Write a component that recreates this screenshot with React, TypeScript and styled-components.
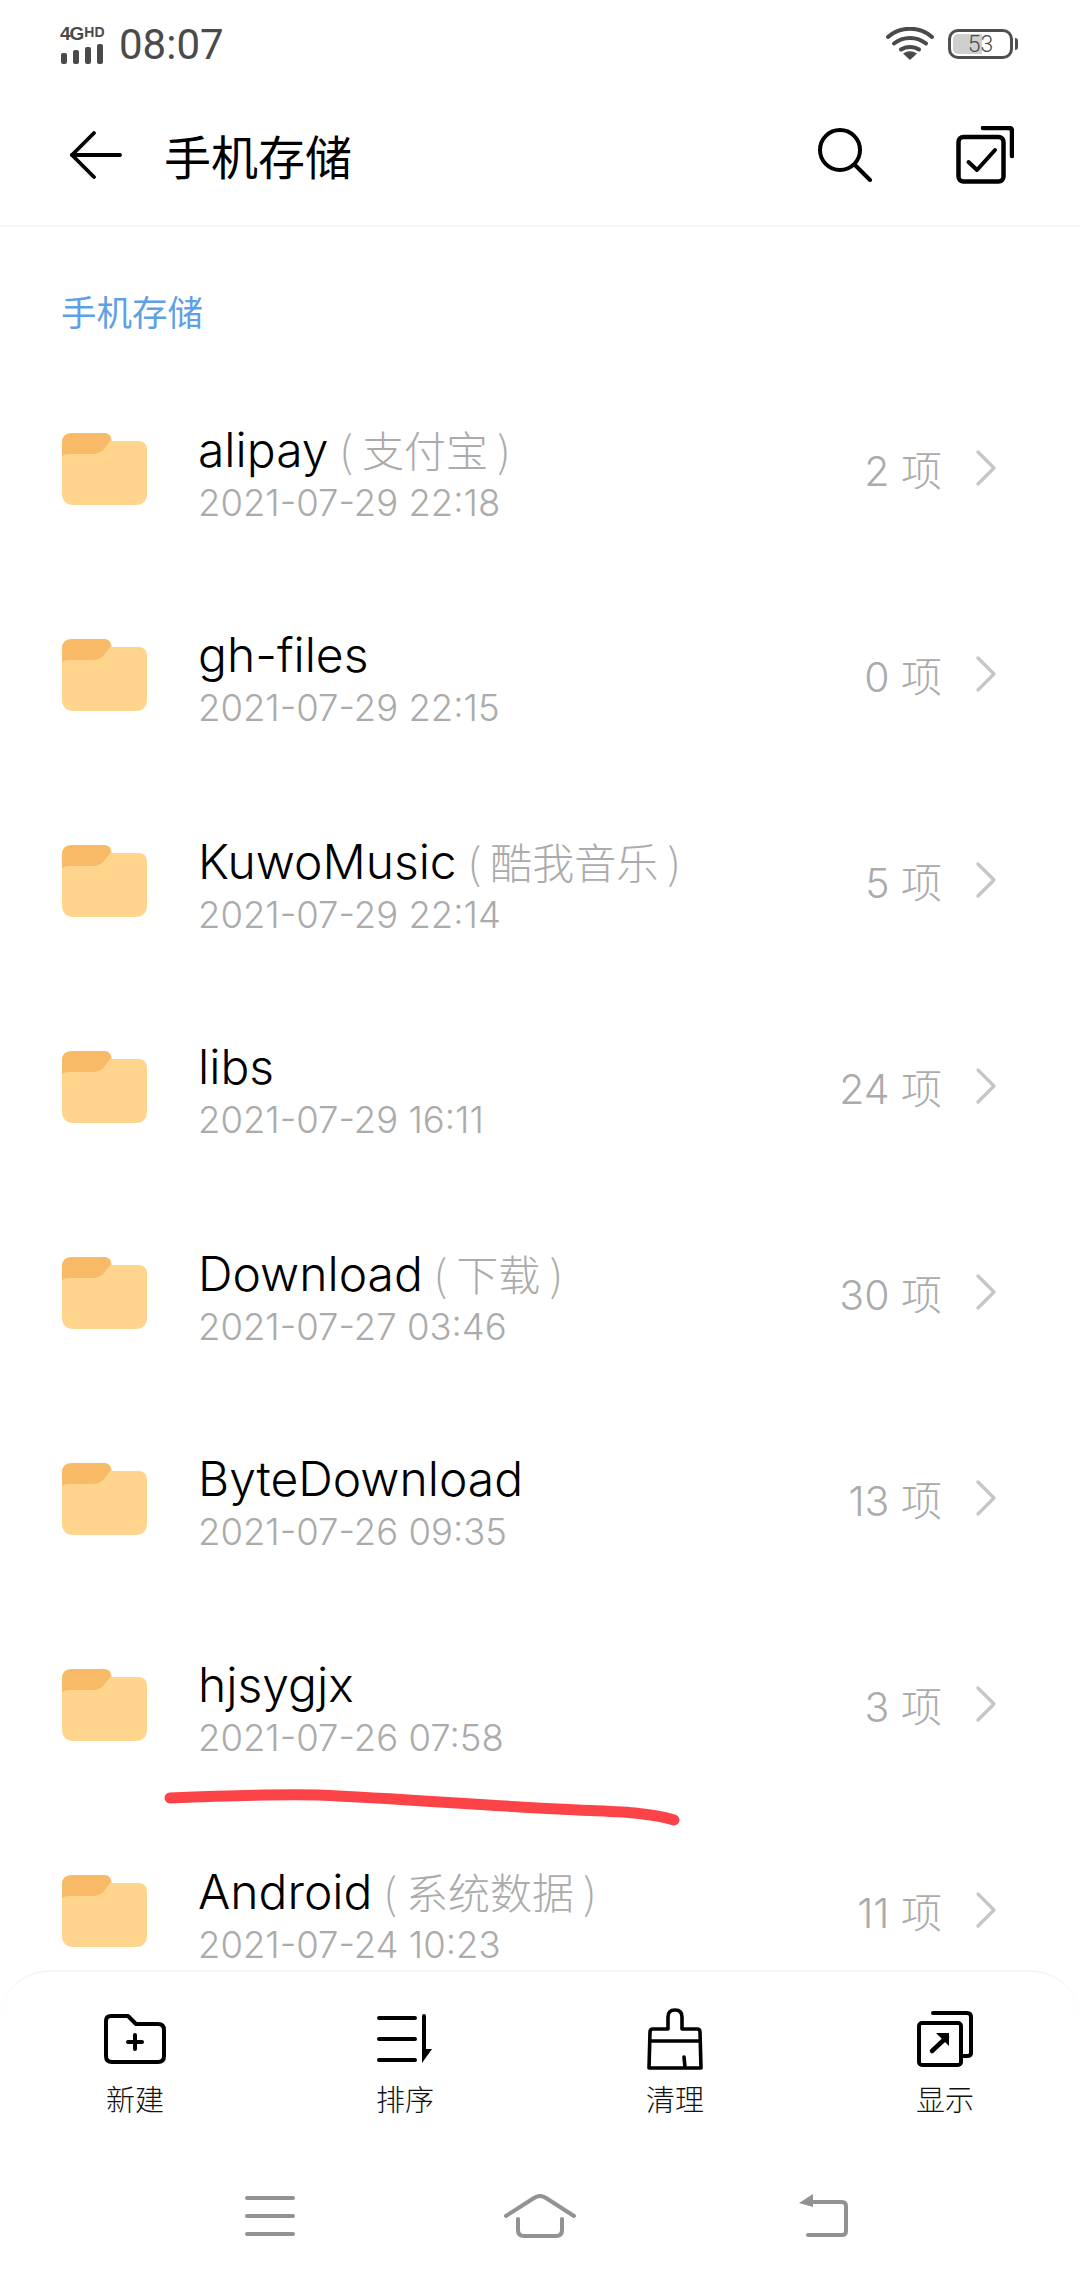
import React from 'react';
import styled, { createGlobalStyle } from 'styled-components';

const Global = createGlobalStyle`
    html, body {
        margin: 0;
        padding: 0;
        background: #fff;
    }
    body {
        font-family: Inter, "Noto Sans CJK SC", sans-serif;
    }
`;

const Page = styled.div`
    width: 1080px;
    height: 2280px;
    display: flex;
    flex-direction: column;
    background: #fff;
    overflow: hidden;
`;

const StatusBar = styled.div`
    height: 78px;
    flex: none;
    display: flex;
    align-items: center;
    justify-content: space-between;
    padding: 10px 60px 0 60px;
    box-sizing: border-box;
    color: #4a4a4a;
`;

const StatusLeft = styled.div`
    display: flex;
    align-items: center;
    gap: 13px;
`;

const StatusRight = styled.div`
    display: flex;
    align-items: center;
    gap: 14px;
`;

const Signal = styled.div`
    width: 46px;
    display: flex;
    flex-direction: column;
    gap: 1px;
`;

const SignalText = styled.div`
    display: flex;
    align-items: flex-start;
    gap: 1px;
    height: 18px;
    font-family: "Liberation Sans", sans-serif;
    font-weight: 700;
    font-size: 19px;
    line-height: 18px;
    letter-spacing: -1px;
    white-space: nowrap;
`;

const SignalHd = styled.span`
    font-size: 14px;
    line-height: 14px;
    letter-spacing: 0;
`;

const Clock = styled.div`
    font-family: Roboto, sans-serif;
    font-weight: 400;
    font-size: 42px;
    line-height: 46px;
    padding-top: 2px;
`;

const Battery = styled.div`
    position: relative;
    width: 65px;
    height: 30px;
    box-sizing: border-box;
    border: 3px solid #4f4f4f;
    border-radius: 10px;
    margin-right: 7px;
    display: flex;
    align-items: center;
    justify-content: center;
    font-family: Roboto, sans-serif;
    font-size: 23px;
    font-weight: 300;
    color: #4a4a4a;
    &::after {
        content: "";
        position: absolute;
        right: -8px;
        top: 6px;
        width: 3px;
        height: 12px;
        background: #4f4f4f;
        border-radius: 0 3px 3px 0;
    }
`;

const BatteryFill = styled.div`
    position: absolute;
    left: 2px;
    top: 2px;
    bottom: 2px;
    width: 29px;
    background: #cfcfcf;
    border-radius: 5px 0 0 5px;
`;

const BatteryText = styled.span`
    position: relative;
`;

const Header = styled.div`
    height: 149px;
    flex: none;
    box-sizing: border-box;
    border-bottom: 2px solid #f6f6f6;
    display: flex;
    align-items: center;
    padding: 6px 66px 0 70px;
`;

const Title = styled.div`
    margin-left: 42px;
    font-family: "Noto Sans CJK SC", sans-serif;
    font-size: 47px;
    color: #000;
    flex: 1;
`;

const HeaderActions = styled.div`
    display: flex;
    align-items: center;
    gap: 84px;
`;

const Section = styled.div`
    flex: none;
    height: 138px;
    box-sizing: border-box;
    padding: 61px 0 0 61px;
    font-family: "Noto Sans CJK SC", sans-serif;
    font-size: 35.500px;
    line-height: 46px;
    color: #5f9fe6;
`;

const List = styled.div`
    flex: 1;
    position: relative;
    overflow: hidden;
    min-height: 0;
`;

const Row = styled.div`
    height: 206px;
    flex: none;
    display: flex;
    align-items: center;
    padding: 0 83px 0 62px;
`;

const FolderSvg = styled.svg`
    margin-top: 2px;
    flex: none;
`;

const Info = styled.div`
    flex: 1;
    margin-left: 51px;
    display: flex;
    flex-direction: column;
    gap: 4px;
    position: relative;
    top: 5px;
`;

const NameLine = styled.div`
    font-size: 48px;
    line-height: 54px;
    font-weight: 300;
    color: #000;
    white-space: nowrap;
`;

const Alias = styled.span`
    font-family: "Noto Sans CJK SC", sans-serif;
    font-size: 42px;
    font-weight: 300;
    color: #ababab;
    margin-left: 11px;
`;

const DateLine = styled.div`
    font-size: 36.500px;
    line-height: 44px;
    font-weight: 300;
    color: #ababab;
`;

const Count = styled.div`
    font-size: 41px;
    font-weight: 300;
    color: #ababab;
    margin-right: 33px;
    white-space: nowrap;
    font-family: Inter, "Noto Sans CJK SC", sans-serif;
`;

const Stroke = styled.svg`
    position: absolute;
    left: 158px;
    top: 1417px;
    pointer-events: none;
`;

const BottomPanel = styled.div`
    height: 188px;
    flex: none;
    box-sizing: border-box;
    border-top: 2px solid #f5f5f5;
    border-radius: 50px 50px 0 0;
    display: grid;
    grid-template-columns: repeat(4, 270px);
    padding-top: 34px;
    background: #fff;
`;

const Tab = styled.div`
    display: flex;
    flex-direction: column;
    align-items: center;
`;

const TabIcon = styled.div`
    height: 66px;
    display: flex;
    align-items: center;
    justify-content: center;
`;

const TabLabel = styled.div`
    margin-top: 7px;
    font-family: "Noto Sans CJK SC", sans-serif;
    font-size: 29px;
    line-height: 38px;
    font-weight: 300;
    color: #111;
`;

const NavBar = styled.div`
    height: 122px;
    flex: none;
    display: grid;
    grid-template-columns: 270px 270px 296px;
    padding-left: 135px;
    align-items: center;
    justify-items: center;
    padding-bottom: 6px;
    box-sizing: border-box;
`;

const Folder = () => (
    <FolderSvg width="85" height="72" viewBox="0 0 85 72">
        <path d="M10 0H42Q48 0 50 8H76Q85 8 85 17V60Q85 72 73 72H12Q0 72 0 60V10Q0 0 10 0Z" fill="#ffd48c" />
        <path d="M0 24V10Q0 0 10 0H42Q49 0 49 7L41 17Q37 21 31 21H8Q0 21 0 24Z" fill="#f8ba66" />
    </FolderSvg>
);

const Chevron = () => (
    <svg width="22" height="36" viewBox="0 0 22 36" fill="none">
        <path d="M3 2L19 18L3 34" stroke="#c6c6c6" strokeWidth="3.200" strokeLinecap="round" strokeLinejoin="round" />
    </svg>
);

const WifiIcon = () => (
    <svg width="48" height="34" viewBox="0 0 48 34" fill="none" stroke="#4a4a4a" strokeWidth="4" strokeLinecap="round">
        <path d="M2 10C14 -1 34 -1 46 10" />
        <path d="M8 16.500C17 9 31 9 40 16.500" />
        <path d="M15 22.500C20 19 28 19 33 22.500" />
        <path d="M17 26.500L24 33L31 26.500Q24 22 17 26.500Z" fill="#4a4a4a" stroke="none" />
    </svg>
);

const BackArrow = () => (
    <svg width="52" height="48" viewBox="0 0 52 48" fill="none" stroke="#000" strokeWidth="3.800" strokeLinecap="round" strokeLinejoin="round">
        <path d="M24 2L2 24L24 46" />
        <path d="M2 24H50" />
    </svg>
);

const SearchIcon = () => (
    <svg width="54" height="54" viewBox="0 0 54 54" fill="none" stroke="#000" strokeWidth="4" strokeLinecap="round">
        <circle cx="22" cy="22" r="20" />
        <path d="M37 37L52 52" />
    </svg>
);

const SelectIcon = () => (
    <svg width="58" height="58" viewBox="0 0 58 58" fill="none" stroke="#000" strokeLinecap="round" strokeLinejoin="round">
        <path d="M27 2H53Q56 2 56 5V30" strokeWidth="4.500" />
        <rect x="2.500" y="11" width="45" height="44.500" rx="5" strokeWidth="4.500" />
        <path d="M12.500 36L21 44L39 24" strokeWidth="4" />
    </svg>
);

const NewFolderIcon = () => (
    <svg width="62" height="50" viewBox="0 0 62 50" fill="none" stroke="#000" strokeWidth="4" strokeLinecap="round" strokeLinejoin="round">
        <path d="M7 2H24L32 10H54Q60 10 60 16V42Q60 48 54 48H8Q2 48 2 42V7Q2 2 7 2Z" />
        <path d="M31 21V35M24 28H38" />
    </svg>
);

const SortIcon = () => (
    <svg width="56" height="50" viewBox="0 0 56 50" fill="none" stroke="#000" strokeWidth="4" strokeLinecap="round">
        <path d="M2 4H38M2 25H38M2 46H38" />
        <path d="M47 2V36" />
        <path d="M45 35H55L45 49Z" fill="#000" stroke="none" />
    </svg>
);

const CleanIcon = () => (
    <svg width="56" height="62" viewBox="0 0 56 62" fill="none" stroke="#000" strokeWidth="3.600" strokeLinejoin="round" strokeLinecap="round">
        <path d="M21 21V9Q21 2 28 2Q35 2 35 9V21H50Q53 21 53 24L54 60H2L3 24Q3 21 6 21Z" />
        <path d="M3 33H53" />
        <path d="M37 49L38 59" />
    </svg>
);

const DisplayIcon = () => (
    <svg width="56" height="56" viewBox="0 0 56 56" fill="none" stroke="#000" strokeLinejoin="round" strokeLinecap="round">
        <path d="M16 2H50Q54 2 54 6V42Q54 45 50 45H47" strokeWidth="4" />
        <rect x="2" y="12" width="42" height="42" rx="3" strokeWidth="4" />
        <path d="M15 40L30 26" strokeWidth="4.500" />
        <path d="M19 22H32V35Z" fill="#000" stroke="none" />
    </svg>
);

const MenuNav = () => (
    <svg width="50" height="40" viewBox="0 0 50 40" fill="none" stroke="#929292" strokeWidth="4" strokeLinecap="round">
        <path d="M2 2H48M2 20H48M2 38H48" />
    </svg>
);

const HomeNav = () => (
    <svg width="72" height="44" viewBox="0 0 72 44" fill="none" stroke="#929292" strokeWidth="4" strokeLinecap="round" strokeLinejoin="round">
        <path d="M2 22L30 4Q36 0 42 4L70 22" />
        <path d="M14 25V36Q14 42 20 42H52Q58 42 58 36V25" />
    </svg>
);

const BackNav = () => (
    <svg width="50" height="44" viewBox="0 0 50 44" fill="none" stroke="#929292" strokeWidth="4" strokeLinecap="round" strokeLinejoin="round">
        <path d="M10 8H44Q48 8 48 12V37Q48 41 44 41H10" />
        <path d="M15 0V13L1 9Z" fill="#929292" stroke="none" />
    </svg>
);

type Item = { name: string; alias?: string; date: string; count: number };

const items: Item[] = [
    { name: 'alipay', alias: '( 支付宝 )', date: '2021-07-29 22:18', count: 2 },
    { name: 'gh-files', date: '2021-07-29 22:15', count: 0 },
    { name: 'KuwoMusic', alias: '( 酷我音乐 )', date: '2021-07-29 22:14', count: 5 },
    { name: 'libs', date: '2021-07-29 16:11', count: 24 },
    { name: 'Download', alias: '( 下载 )', date: '2021-07-27 03:46', count: 30 },
    { name: 'ByteDownload', date: '2021-07-26 09:35', count: 13 },
    { name: 'hjsygjx', date: '2021-07-26 07:58', count: 3 },
    { name: 'Android', alias: '( 系统数据 )', date: '2021-07-24 10:23', count: 11 },
];

const tabs = [
    { label: '新建', icon: <NewFolderIcon /> },
    { label: '排序', icon: <SortIcon /> },
    { label: '清理', icon: <CleanIcon /> },
    { label: '显示', icon: <DisplayIcon /> },
];

const App = () => {
    return (
        <Page>
            <Global />
            <StatusBar>
                <StatusLeft>
                    <Signal>
                        <SignalText>
                            4G<SignalHd>HD</SignalHd>
                        </SignalText>
                        <svg width="44" height="20" viewBox="0 0 44 20" fill="#4a4a4a">
                            <rect x="1" y="9" width="6" height="11" rx="2" />
                            <rect x="13" y="6" width="6" height="14" rx="2" />
                            <rect x="25" y="3" width="6" height="17" rx="2" />
                            <rect x="37" y="0" width="6" height="20" rx="2" />
                        </svg>
                    </Signal>
                    <Clock>08:07</Clock>
                </StatusLeft>
                <StatusRight>
                    <WifiIcon />
                    <Battery>
                        <BatteryFill />
                        <BatteryText>53</BatteryText>
                    </Battery>
                </StatusRight>
            </StatusBar>
            <Header>
                <BackArrow />
                <Title>手机存储</Title>
                <HeaderActions>
                    <SearchIcon />
                    <SelectIcon />
                </HeaderActions>
            </Header>
            <Section>手机存储</Section>
            <List>
                {items.map((item) => (
                    <Row key={item.name}>
                        <Folder />
                        <Info>
                            <NameLine>
                                {item.name}
                                {item.alias ? <Alias>{item.alias}</Alias> : null}
                            </NameLine>
                            <DateLine>{item.date}</DateLine>
                        </Info>
                        <Count>{item.count} 项</Count>
                        <Chevron />
                    </Row>
                ))}
                <Stroke width="530" height="50" viewBox="0 0 530 50" fill="none">
                    <path d="M12 16C60 14 110 12 160 13C250 17 330 24 420 28C460 30 490 30 516 38" stroke="#fb4348" strokeWidth="11" strokeLinecap="round" />
                </Stroke>
            </List>
            <BottomPanel>
                {tabs.map((tab) => (
                    <Tab key={tab.label}>
                        <TabIcon>{tab.icon}</TabIcon>
                        <TabLabel>{tab.label}</TabLabel>
                    </Tab>
                ))}
            </BottomPanel>
            <NavBar>
                <MenuNav />
                <HomeNav />
                <BackNav />
            </NavBar>
        </Page>
    );
};

export default App;
